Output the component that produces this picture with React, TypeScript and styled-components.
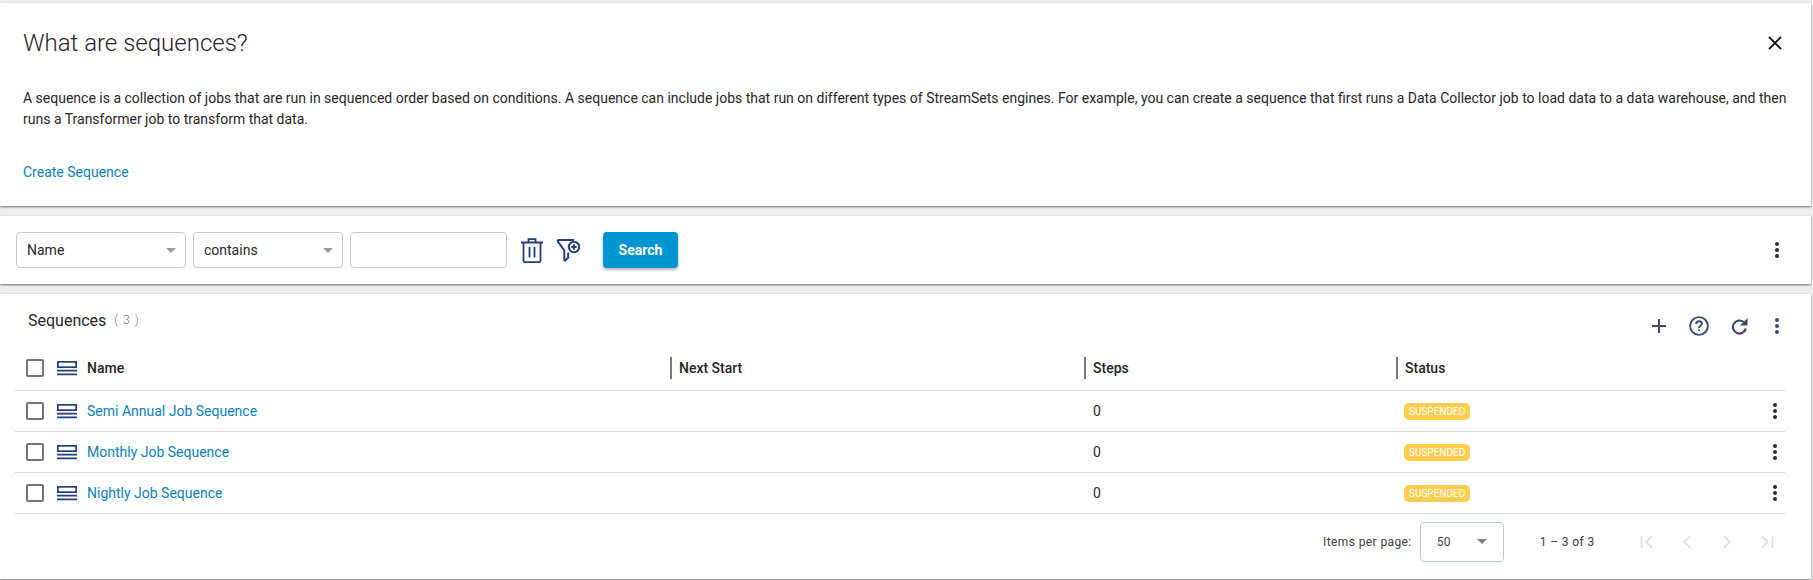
import React from 'react';
import styled, { createGlobalStyle } from 'styled-components';

const NAVY = '#1f3f7f';
const SLATE = '#3a4d6e';
const LINK = '#0b7fbd';

const GlobalStyle = createGlobalStyle`
  html, body {
    margin: 0;
    padding: 0;
    height: 580px;
    overflow: hidden;
    background: #eeeeee;
    font-family: Roboto, "Liberation Sans", sans-serif;
    color: #262626;
  }
  * { box-sizing: border-box; }
`;

const Page = styled.div`
  display: flex;
  flex-direction: column;
  width: 1811px;
  padding-top: 3px;
  gap: 10px;
`;
const Card = styled.section`
  background: #fff;
  box-shadow: 0 1px 2px rgba(0, 0, 0, 0.55);
`;
const IntroCard = styled(Card)`
  height: 203px;
  padding: 24px 10px 0 23px;
`;
const IntroHead = styled.div`
  display: flex;
  justify-content: space-between;
  align-items: center;
  height: 32px;
  padding-right: 19px;
`;
const IntroTitle = styled.h1`
  margin: 0;
  font-size: 24px;
  font-weight: 300;
  line-height: 32px;
`;
const IntroText = styled.p`
  margin: 29px 0 32px;
  font-size: 14px;
  line-height: 21px;
  font-weight: 400;
`;
const LinkText = styled.a`
  color: ${LINK};
  font-size: 14px;
  line-height: 21px;
  display: block;
`;

const FilterCard = styled(Card)`
  height: 68px;
  display: flex;
  align-items: center;
  padding: 0 32px 0 16px;
`;
const Field = styled.div<{ $width: number }>`
  width: ${(p) => p.$width}px;
  height: 36px;
  border: 1px solid #c8c8c8;
  border-radius: 4px;
  margin-right: 7px;
  padding: 0 9px 0 10px;
  display: flex;
  align-items: center;
  justify-content: space-between;
  font-size: 14px;
`;
const Caret = styled.span<{ $color?: string }>`
  width: 0;
  height: 0;
  border-left: 5.5px solid transparent;
  border-right: 5.5px solid transparent;
  border-top: 5.5px solid ${(p) => p.$color || '#9a9a9a'};
`;
const FilterIcons = styled.div`
  display: flex;
  align-items: center;
  gap: 13px;
  margin-left: 7px;
`;
const SearchButton = styled.button`
  margin-left: 23px;
  width: 75px;
  height: 36px;
  border: 0;
  border-radius: 4px;
  background: #0096d2;
  color: #fff;
  font: 700 14px Roboto, sans-serif;
  box-shadow: 0 2px 3px rgba(0, 0, 0, 0.3);
`;
const Spacer = styled.div`
  flex: 1;
`;
const Dots = styled.span<{ $color?: string }>`
  display: inline-flex;
  flex-direction: column;
  align-items: center;
  gap: 2px;
  width: 4px;
  & > i {
    width: 4px;
    height: 4px;
    border-radius: 50%;
    background: ${(p) => p.$color || '#2b2b2b'};
  }
`;

const TableCard = styled(Card)`
  height: 285px;
  padding-left: 15px;
`;
const TableHead = styled.div`
  display: flex;
  align-items: center;
  height: 46px;
  padding: 6px 32px 0 13px;
`;
const TableTitle = styled.h2`
  margin: 0;
  font-size: 16px;
  font-weight: 400;
`;
const Count = styled.span`
  margin-left: 8px;
  font-size: 12px;
  font-weight: 300;
  color: #777;
  letter-spacing: 1px;
`;
const TableTools = styled.div`
  display: flex;
  align-items: center;
  gap: 22px;
  margin-top: 12px;
`;
const ToolDots = styled.span`
  display: inline-flex;
  margin-left: 5px;
`;
const Row = styled.div<{ $head?: boolean }>`
  display: grid;
  grid-template-columns: 655px 414px 312px 1fr 28px;
  align-items: center;
  width: 1770px;
  height: ${(p) => (p.$head ? 51 : 41)}px;
  padding-top: ${(p) => (p.$head ? 6 : 0)}px;
  border-bottom: 1px solid #dcdcdc;
  font-size: 14px;
  font-weight: ${(p) => (p.$head ? 500 : 400)};
`;
const NameCell = styled.div`
  display: flex;
  align-items: center;
  padding-left: 11px;
`;
const HeadCell = styled.div`
  display: flex;
  align-items: center;
  gap: 7px;
`;
const Separator = styled.span`
  width: 2px;
  height: 22px;
  background: #777;
`;
const Check = styled.span`
  width: 18px;
  height: 18px;
  border: 2px solid #757575;
  border-radius: 2px;
  margin-right: 13px;
`;
const RowName = styled.a`
  color: ${LINK};
  margin-left: 10px;
`;
const HeadName = styled.span`
  margin-left: 10px;
`;
const ValueCell = styled.div`
  padding-left: 9px;
`;
const StatusCell = styled.div`
  padding-left: 8px;
`;
const RowMenu = styled.div`
  display: flex;
  justify-content: flex-end;
  padding-right: 8px;
`;
const Badge = styled.span`
  display: inline-flex;
  align-items: center;
  height: 17px;
  padding: 0 5px;
  border-radius: 5px;
  background: #ffcd4e;
  color: #fff;
  font-size: 10px;
`;
const Pager = styled.div`
  display: flex;
  align-items: center;
  width: 1770px;
  height: 55px;
  padding-left: 1308px;
  font-size: 12px;
  letter-spacing: 0.4px;
  color: #3c3c3c;
`;
const PageSize = styled.div`
  width: 84px;
  height: 40px;
  margin-left: 8px;
  border: 1px solid #b9c9d8;
  border-radius: 4px;
  padding: 0 16px;
  display: flex;
  align-items: center;
  justify-content: space-between;
`;
const PageRange = styled.span`
  margin-left: 36px;
`;
const PagerIcons = styled.div`
  display: flex;
  align-items: center;
  margin-left: 45px;
  gap: 26px;
`;

const MoreDots = ({ color }: { color?: string }) => (
  <Dots $color={color}>
    <i />
    <i />
    <i />
  </Dots>
);

const StackIcon = () => (
  <svg width="20" height="15" viewBox="0 0 20 15" fill="none" stroke={NAVY} strokeWidth="1.7">
    <rect x="0.85" y="0.85" width="18.3" height="5.3" />
    <path d="M0 9.700h20M0 13.300h20" />
  </svg>
);

const TrashIcon = () => (
  <svg width="22" height="25" viewBox="0 0 22 25" fill="none" stroke={NAVY} strokeWidth="1.8">
    <path d="M0 4.500h22M7.500 4.500V1.200h7v3.300" />
    <path d="M2.500 4.500v18.300q0 1.400 1.400 1.400h14.200q1.400 0 1.400-1.400V4.500" />
    <path d="M8.500 9v10.500M13.500 9v10.500" />
  </svg>
);

const FilterPlusIcon = () => (
  <svg width="24" height="24" viewBox="0 0 24 24" fill="none" stroke={NAVY} strokeWidth="2">
    <path d="M18 2H3.200Q1 2 2 3.700L8.300 12.500v8.800q0 1.700 1.300 1l2.600-2.800v-5" />
    <circle cx="18" cy="9" r="5.200" fill="#fff" />
    <path d="M15.300 9h5.400M18 6.300v5.400" />
  </svg>
);

const PlusIcon = () => (
  <svg width="16" height="16" viewBox="0 0 16 16" stroke={SLATE} strokeWidth="2">
    <path d="M8 1v14M1 8h14" />
  </svg>
);

const HelpIcon = () => (
  <svg width="20" height="20" viewBox="0 0 20 20" fill="none" stroke={SLATE} strokeWidth="1.900">
    <circle cx="10" cy="10" r="8.900" />
    <path d="M7.200 8c0-1.700 1.200-2.800 2.900-2.800 1.600 0 2.800 1 2.800 2.400 0 2.200-2.900 2.200-2.900 4.400" />
    <path d="M10 13.500v1.700" />
  </svg>
);

const RefreshIcon = () => (
  <svg width="17" height="17" viewBox="0 0 17 17" fill="none" stroke={SLATE} strokeWidth="2.200">
    <path d="M14.800 10.500A6.500 6.500 0 1 1 12.600 4" />
    <path d="M16.500 0v7.500H9z" fill={SLATE} stroke="none" />
  </svg>
);

const CloseIcon = () => (
  <svg width="14" height="14" viewBox="0 0 14 14" stroke="#111" strokeWidth="1.800">
    <path d="M1 1l12 12M13 1L1 13" />
  </svg>
);

const PagerIcon = ({ d }: { d: string }) => (
  <svg width="14" height="14" viewBox="0 0 14 14" fill="none" stroke="#dedede" strokeWidth="1.800">
    <path d={d} />
  </svg>
);

const rows = ['Semi Annual Job Sequence', 'Monthly Job Sequence', 'Nightly Job Sequence'];

const App: React.FC = () => {
  return (
    <Page>
      <GlobalStyle />
      <IntroCard>
        <IntroHead>
          <IntroTitle>What are sequences?</IntroTitle>
          <CloseIcon />
        </IntroHead>
        <IntroText>
          A sequence is a collection of jobs that are run in sequenced order based on conditions. A sequence can include
          jobs that run on different types of StreamSets engines. For example, you can create a sequence that first runs a
          Data Collector job to load data to a data warehouse, and then runs a Transformer job to transform that data.
        </IntroText>
        <LinkText>Create Sequence</LinkText>
      </IntroCard>

      <FilterCard>
        <Field $width={170}>
          Name
          <Caret />
        </Field>
        <Field $width={150}>
          contains
          <Caret />
        </Field>
        <Field $width={157} />
        <FilterIcons>
          <TrashIcon />
          <FilterPlusIcon />
        </FilterIcons>
        <SearchButton>Search</SearchButton>
        <Spacer />
        <MoreDots />
      </FilterCard>

      <TableCard>
        <TableHead>
          <TableTitle>Sequences</TableTitle>
          <Count>( 3 )</Count>
          <Spacer />
          <TableTools>
            <PlusIcon />
            <HelpIcon />
            <RefreshIcon />
            <ToolDots>
              <MoreDots color={SLATE} />
            </ToolDots>
          </TableTools>
        </TableHead>
        <Row $head>
          <NameCell>
            <Check />
            <StackIcon />
            <HeadName>Name</HeadName>
          </NameCell>
          <HeadCell>
            <Separator />
            Next Start
          </HeadCell>
          <HeadCell>
            <Separator />
            Steps
          </HeadCell>
          <HeadCell>
            <Separator />
            Status
          </HeadCell>
        </Row>
        {rows.map((name) => (
          <Row key={name}>
            <NameCell>
              <Check />
              <StackIcon />
              <RowName>{name}</RowName>
            </NameCell>
            <div />
            <ValueCell>0</ValueCell>
            <StatusCell>
              <Badge>SUSPENDED</Badge>
            </StatusCell>
            <RowMenu>
              <MoreDots />
            </RowMenu>
          </Row>
        ))}
        <Pager>
          Items per page:
          <PageSize>
            50
            <Caret $color="#808080" />
          </PageSize>
          <PageRange>1 – 3 of 3</PageRange>
          <PagerIcons>
            <PagerIcon d="M1.500 1v12M12 1.500L6 7l6 5.500" />
            <PagerIcon d="M10 1.500L4 7l6 5.500" />
            <PagerIcon d="M4 1.500L10 7l-6 5.500" />
            <PagerIcon d="M12.500 1v12M2 1.500L8 7l-6 5.500" />
          </PagerIcons>
        </Pager>
      </TableCard>
    </Page>
  );
};

export default App;
